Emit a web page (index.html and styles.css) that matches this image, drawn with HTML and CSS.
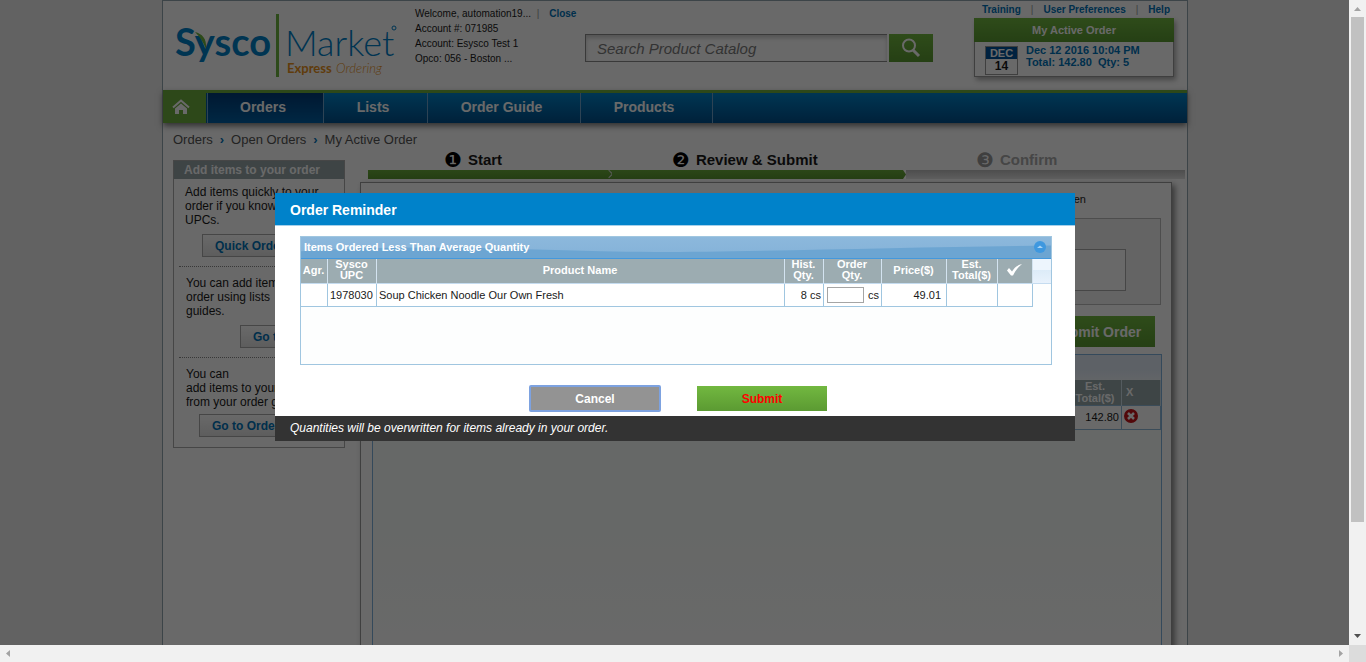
FILE: index.html
```html
<!DOCTYPE html>
<html lang="en">
<head>
<meta charset="utf-8">
<title>My Active Order</title>
<link rel="stylesheet" href="styles.css">
</head>
<body>
<div class="window">
  <div class="viewport">
    <div class="page">
      <header class="header">
        <svg class="logo" width="240" height="84" viewBox="0 0 240 84" role="img" aria-label="Sysco Market Express Ordering">
          <text class="logo-sysco" x="12" y="55">Sysco</text>
          <path d="M32 31c7 2 12 6 11 17c-3-7-5-11-11-17z" fill="#6eb43f"/>
          <rect x="113" y="13" width="3" height="63" fill="#6eb43f"/>
          <text class="logo-market" x="122" y="55">Market</text>
          <circle cx="231" cy="27" r="2" fill="none" stroke="#0080c8"/>
          <text class="logo-express" x="124" y="72">Express</text>
          <text class="logo-ordering" x="173" y="72">Ordering</text>
        </svg>
        <div class="account">
          <div>Welcome, automation19... <span class="sep">|</span> <a href="#">Close</a></div>
          <div>Account #: 071985</div>
          <div>Account: Esysco Test 1</div>
          <div>Opco: 056 - Boston ...</div>
        </div>
        <form class="search">
          <input type="text" aria-label="Search Product Catalog" placeholder="Search Product Catalog">
          <button type="button" aria-label="Search">
            <svg width="20" height="20" viewBox="0 0 20 20" fill="none" stroke="#fff" stroke-width="2"><circle cx="8" cy="7.500" r="6"/><path d="M12 12l6 6" stroke-width="3"/></svg>
          </button>
        </form>
        <div class="tools">
          <nav class="links"><a href="#">Training</a><span class="sep">|</span><a href="#">User Preferences</a><span class="sep">|</span><a href="#">Help</a></nav>
          <section class="active">
            <h2>My Active Order</h2>
            <div class="active-body">
              <div class="cal"><b>DEC</b><span>14</span></div>
              <a href="#">Dec 12 2016 10:04 PM<br>Total: 142.80&nbsp; Qty: 5</a>
            </div>
          </section>
        </div>
      </header>
      <nav class="nav">
        <a class="home" href="#" aria-label="Home"><svg width="18" height="16" viewBox="0 0 18 16"><path d="M1 8.500L9 1.500l8 7" fill="none" stroke="#fff" stroke-width="2"/><path d="M3 9.500l6-5 6 5V15h-4v-4H7v4H3z" fill="#fff"/></svg></a>
        <a class="current w-orders" href="#">Orders</a>
        <a class="w-lists" href="#">Lists</a>
        <a class="w-guide" href="#">Order Guide</a>
        <a class="w-products" href="#">Products</a>
      </nav>
      <div class="content">
        <div class="crumbs"><a href="#">Orders</a><b>›</b><a href="#">Open Orders</a><b>›</b><span>My Active Order</span></div>
        <aside class="side">
          <h2>Add items to your order</h2>
          <div class="side-item">
            <p>Add items quickly to your<br>order if you know</p>
            <p>UPCs.</p>
            <button class="side-btn b-quick" type="button">Quick Order</button>
          </div>
          <div class="side-item">
            <p>You can add items<br>order using lists</p>
            <p>guides.</p>
            <button class="side-btn b-lists" type="button">Go to Lists</button>
          </div>
          <div class="side-item">
            <p>You can<br>add items to your</p>
            <p>from your order guide.</p>
            <button class="side-btn b-guide" type="button">Go to Order Guide</button>
          </div>
        </aside>
        <main class="main">
          <ol class="steps">
            <li class="done s-start"><span><i>❶</i>Start</span></li>
            <li class="done s-review"><span><i>❷</i>Review &amp; Submit</span></li>
            <li class="s-confirm"><span><i>❸</i>Confirm</span></li>
          </ol>
          <section class="panel">
            <div class="filters">
              <input class="f-name" type="text" aria-label="Order name">
              <input class="f-date" type="text" aria-label="Delivery date">
              <button class="f-cal" type="button" aria-label="Calendar"></button>
              <span>Open</span>
            </div>
            <div class="notes"><textarea aria-label="Notes"></textarea></div>
            <button class="submit-order" type="button">Submit Order</button>
            <div class="order-grid">
              <div class="order-title"></div>
              <table>
                <thead><tr><th></th><th class="o-total">Est.<br>Total($)</th><th class="o-x">X</th></tr></thead>
                <tbody><tr><td></td><td class="num">142.80</td><td><svg width="14" height="14" viewBox="0 0 14 14"><circle cx="7" cy="7" r="7" fill="#c8141a"/><path d="M4 4l6 6M10 4l-6 6" stroke="#fff" stroke-width="2.500"/></svg></td></tr></tbody>
              </table>
            </div>
          </section>
        </main>
      </div>
    </div>
    <div class="overlay">
      <div class="dialog" role="dialog" aria-labelledby="dlg-title">
        <h1 id="dlg-title">Order Reminder</h1>
        <div class="dialog-body">
          <section class="grid">
            <div class="grid-title">
              <svg class="swoosh" viewBox="0 0 750 22" preserveAspectRatio="none"><path d="M0 22V15C100 8 200 12 300 15S600 10 750 9v13z" fill="#6ca5d2"/></svg>
              <span>Items Ordered Less Than Average Quantity</span>
              <button type="button" aria-label="Collapse"><svg width="12" height="12" viewBox="0 0 12 12"><circle cx="6" cy="6" r="6" fill="#3f98df"/><path d="M3 7l3-2.500 3 2.500z" fill="#a9d4f5"/></svg></button>
            </div>
            <div class="grid-head">
              <table>
                <colgroup><col class="c-agr"><col class="c-upc"><col><col class="c-hist"><col class="c-qty"><col class="c-price"><col class="c-total"><col class="c-check"></colgroup>
                <thead><tr><th>Agr.</th><th>Sysco<br>UPC</th><th>Product Name</th><th>Hist.<br>Qty.</th><th>Order<br>Qty.</th><th>Price($)</th><th>Est.<br>Total($)</th><th><svg width="17" height="14" viewBox="0 0 17 14"><path d="M1 7.500L3 5l3 3.500C9 4 12 2 16 1c-4 3-7 7-9 11.500H5z" fill="#fff"/></svg></th></tr></thead>
                <tbody><tr><td></td><td>1978030</td><td>Soup Chicken Noodle Our Own Fresh</td><td class="num">8 cs</td><td class="qty"><div><input type="text" aria-label="Order quantity"><span>cs</span></div></td><td class="num price">49.01</td><td></td><td></td></tr></tbody>
              </table>
              <div class="grid-gutter"></div>
            </div>
          </section>
          <div class="actions">
            <button class="cancel" type="button">Cancel</button>
            <button class="submit" type="button">Submit</button>
          </div>
        </div>
        <footer>Quantities will be overwritten for items already in your order.</footer>
      </div>
    </div>
  </div>
  <div class="bar-v">
    <svg width="17" height="17"><path d="M5 11h7L8.500 7z" fill="#a3a3a3"/></svg>
    <div class="thumb-v"></div>
    <svg class="end" width="17" height="17"><path d="M5 6h7l-3.500 4z" fill="#505050"/></svg>
  </div>
  <div class="bar-h">
    <svg width="17" height="17"><path d="M10 5v7L6 8.500z" fill="#a3a3a3"/></svg>
    <svg width="17" height="17"><path d="M7 5v7l4-3.500z" fill="#a3a3a3"/></svg>
  </div>
  <div class="corner"></div>
</div>
</body>
</html>
```
FILE: styles.css
```css
* { box-sizing: border-box; }
body, h1, h2, p, ol { margin: 0; padding: 0; }
body { font: 12px "Liberation Sans", Arial, sans-serif; color: #1a1a1a; }
button, input, textarea { font-family: inherit; border-radius: 0; padding: 0; margin: 0; }
a { color: #0073b8; text-decoration: none; }

.window { display: grid; grid-template: minmax(0, 1fr) 17px / minmax(0, 1fr) 17px; height: 100vh; }
.viewport { position: relative; overflow: hidden; display: flex; background: #ededed; }
.page {
  width: 100%; max-width: 1026px; min-height: 100%; margin: 0 161px 0 162px;
  background: #fff; border: 1px solid #93a5ae; border-bottom: 0;
  display: flex; flex-direction: column;
}

/* header */
.header { display: grid; grid-template-columns: 252px 170px 348px 1fr; height: 89px; flex: none; }
.logo-sysco { font: bold 38px Lato, sans-serif; fill: #0080c8; }
.logo-market { font: 300 36px Lato, sans-serif; fill: #0080c8; }
.logo-express { font: bold 13px Lato, sans-serif; fill: #e8911c; }
.logo-ordering { font: italic 300 13px Lato, sans-serif; fill: #e8911c; }
.account { padding-top: 5px; font-size: 10px; line-height: 15px; white-space: nowrap; }
.account a { font-weight: bold; margin-left: 4px; }
.sep { color: #999; margin: 0 3px; }
.search { display: flex; gap: 2px; height: 28px; margin-top: 33px; }
.search input {
  flex: 1; min-width: 0; padding-left: 11px; background: #fff; border: 1px solid #8c8c8c;
  border-width: 1px 0 1px 1px; box-shadow: inset 0 3px 4px #ccc; font-size: 15px; font-style: italic;
}
.search input::placeholder { color: #7c7c7c; opacity: 1; }
.search button, .submit-order, .submit { border: 0; background: linear-gradient(#72b840, #5b9a32); }
.search button { width: 44px; display: flex; align-items: center; justify-content: center; }
.tools { padding-right: 13px; }
.links { display: flex; justify-content: flex-end; gap: 7px; padding: 2px 4px 0 0; height: 17px; font-size: 10px; line-height: 13px; font-weight: bold; }
.links .sep { font-weight: normal; }
.active { width: 200px; margin-left: auto; background: #fff; border: 1px solid #999; border-top: 0; box-shadow: 2px 3px 5px #aaa; }
.active h2 { background: linear-gradient(#72b840, #5b9a32); margin: 0 -1px; color: #fff; font-size: 11px; line-height: 24px; text-align: center; }
.active-body { display: flex; gap: 8px; height: 34px; padding: 2px 0 0 10px; font-size: 11px; line-height: 12px; font-weight: bold; }
.cal { width: 33px; height: 29px; margin-top: 2px; border: 1px solid #999; text-align: center; }
.cal b { display: block; background: #00549c; color: #fff; height: 12px; }
.cal span { display: block; line-height: 15px; font-size: 12px; }

/* main navigation */
.nav { display: flex; height: 33px; flex: none; border-top: 3px solid #6eae3e; background: linear-gradient(#0083c9, #00508c); box-shadow: 0 3px 6px #777; }
.nav a { color: #fff; font-size: 14px; font-weight: bold; line-height: 28px; text-align: center; border-right: 1px solid #6ea3cc; }
.nav .home { width: 45px; padding-top: 4px; line-height: 16px; background: linear-gradient(90deg, #6eae3e 43px, #005a9c 43px); }
.nav .home svg { margin-top: 2px; margin-right: 8px; }
.nav .current { background: linear-gradient(#003c78, #0060a4); }
.w-orders { width: 116px; padding-right: 5px; }
.w-lists { width: 104px; padding-right: 5px; }
.w-guide { width: 153px; padding-right: 5px; }
.w-products { width: 132px; padding-right: 5px; }

/* page content */
.content {
  flex: 1; display: grid; grid-template: 28px 1fr / 172px minmax(0, 1fr); column-gap: 15px;
  padding: 9px 2px 0 10px;
}
.crumbs { grid-row: 1; grid-column: 1 / 3; font-size: 13px; line-height: 16px; color: #555; }
.crumbs a { color: #555; }
.crumbs b { color: #0073b8; margin: 0 7px; }
.side { grid-row: 2; grid-column: 1; align-self: start; height: 288px; border: 1px solid #aaa; background: #fff; overflow: hidden; white-space: nowrap; }
.side h2 { background: #96a5a9; color: #fff; font-size: 12px; line-height: 18px; padding-left: 10px; }
.side-item { margin: 0 5px; padding: 6px 0 9px 6px; border-bottom: 1px dotted #888; line-height: 14px; }
.side-item + .side-item { padding-top: 9px; padding-left: 7px; }
.side-item:last-child { border: 0; }
.side-btn { display: block; height: 23px; margin-top: 7px; border: 1px solid #aaa; background: linear-gradient(#fff, #e2e2e2); color: #0073b8; font-size: 12px; font-weight: bold; padding: 0 12px; }
.b-quick { margin-left: 17px; }
.b-lists { margin-left: 54px; }
.b-guide { margin-left: 13px; margin-top: 5px; }
.main { grid-row: 2; grid-column: 2; display: flex; flex-direction: column; margin-top: -10px; }
.steps { list-style: none; display: grid; grid-template-columns: 244px 294px 1fr; margin-left: 8px; font-size: 15px; font-weight: bold; line-height: 20px; }
.steps li { position: relative; }
.steps li::after { content: ""; display: block; height: 9px; background: linear-gradient(#bbb, #e4e4e4); }
.steps .done::after { background: linear-gradient(#6aac3a, #5a9630); }
.steps .s-review::after { clip-path: polygon(0 0, 291px 0, 100% 50%, 291px 100%, 0 100%); }
.steps .s-start::before { content: ""; position: absolute; right: 0; bottom: 2px; width: 5px; height: 5px; border: 1px solid #ddd; border-width: 1px 1px 0 0; transform: rotate(45deg); }
.steps span { display: flex; gap: 6px; }
.steps i { font: normal 20px/20px "DejaVu Sans", sans-serif; color: #000; }
.s-start span { padding-left: 76px; }
.s-review span { padding-left: 60px; }
.s-confirm span { padding-left: 70px; color: #aaa; }
.steps .s-confirm i { color: #999; }
.panel { flex: 1; margin: 3px 13px 0 0; padding: 10px 9px 0 11px; background: #fff; border: 1px solid #999; border-bottom: 0; box-shadow: 3px 3px 6px #888; }
.filters { display: flex; height: 25px; padding: 0 76px 0 52px; font-size: 11px; }
.f-name, .f-date, .f-cal { height: 20px; background: #fff; border: 1px solid #777; }
.f-name { width: 214px; }
.f-date { width: 64px; margin-left: 212px; }
.f-cal { width: 19px; margin: 0 auto 0 5px; border-color: #003c78; }
.notes { height: 87px; margin-right: 1px; padding: 30px 34px; background: #f2f2f2; border: 1px solid #bbb; display: flex; }
.notes textarea { flex: 1; height: 42px; border: 1px solid #aaa; background: #fff; resize: none; }
.submit-order { display: block; margin: 11px 7px 7px auto; width: 117px; height: 31px; color: #fff; font-size: 14px; font-weight: bold; }
.order-grid { height: 300px; border: 1px solid #7fb2dd; background: linear-gradient(#f8fcfa 60%, #fff); font-size: 11px; }
.order-title { height: 25px; background: linear-gradient(#e2ecf8 60%, #eef4fb); }
.order-grid table { width: 100%; border-collapse: collapse; table-layout: fixed; }
.order-grid th { background: #96a8ab; color: #fff; height: 25px; padding: 0; line-height: 12px; border-right: 1px solid #ccdde6; }
.order-grid td { height: 24px; padding: 0 2px; border: 1px solid #8fb8d8; border-left: 0; background: #fff; }
.order-grid td svg { display: block; margin-bottom: 3px; }
.o-total { width: 53px; }
.order-grid .o-x { width: 39px; text-align: left; padding-left: 4px; }
.num { text-align: right; }

/* dialog */
.overlay { position: absolute; inset: 0; padding: 193px 0 0 1px; background: rgba(0, 0, 0, .59); }
.dialog { width: 100%; max-width: 800px; margin: 0 auto; background: #fff; }
.dialog h1 { background: #0082ca; border-bottom: 1px solid #a5cfea; color: #fff; font-size: 14px; line-height: 32px; padding: 1px 15px 0; height: 33px; }
.dialog-body { padding: 10px 23px 4px 25px; }
.grid { height: 129px; border: 1px solid #a0c6e0; background: #fdfefe; font-size: 11px; }
.grid-title { position: relative; display: flex; align-items: center; justify-content: space-between; height: 22px; padding: 0 5px 2px 3px; background: linear-gradient(#8cb8dc, #84b2d8); border-bottom: 1px solid #4398dd; color: #fff; font-weight: bold; }
.swoosh { position: absolute; inset: 0; width: 100%; height: 100%; }
.grid-title span, .grid-title button { position: relative; }
.grid-title button { border: 0; background: none; height: 12px; display: flex; }
.grid-head { display: flex; }
.grid table { flex: 1; border-collapse: separate; border-spacing: 0; table-layout: fixed; width: 0; }
.grid-gutter { width: 18px; height: 25px; border-bottom: 1px solid #c5dcf0; background: linear-gradient(#edf5fd 45%, #dcebf8 45%, #e8f2fc); }
.grid th { height: 25px; padding: 0 1px 2px 0; background: #9cacb1; color: #fff; line-height: 11px; border-right: 1px solid #d3e3f0; border-bottom: 1px solid #c5dcf0; }
.grid th svg { display: block; margin: 0 auto; }
.grid td { height: 23px; padding: 0 2px; background: #fff; white-space: nowrap; border-right: 1px solid #a0c6e0; border-bottom: 1px solid #a0c6e0; }
.grid .price { padding-right: 5px; }
.qty div { display: flex; align-items: center; justify-content: space-between; padding-left: 1px; }
.grid td input { width: 37px; height: 16px; border: 1px solid #a5a5a5; background: #fff; }
.c-agr { width: 27px; }
.c-upc { width: 49px; }
.c-hist { width: 39px; }
.c-qty { width: 58px; }
.c-price { width: 65px; }
.c-total { width: 51px; }
.c-check { width: 35px; }
.actions { display: flex; gap: 36px; justify-content: center; padding: 20px 0 0 4px; }
.actions button { height: 27px; font-size: 12px; font-weight: bold; }
.cancel { width: 132px; background: #939393; color: #fff; border: 2px solid #7da2e0; border-radius: 2px; }
.actions .submit { width: 130px; height: 25px; margin-top: 1px; color: #f00; }
.dialog footer { background: #333; color: #fff; font-size: 12px; font-style: italic; line-height: 25px; padding: 0 15px; }

/* scroll bars */
.bar-v { background: #f1f1f1; display: flex; flex-direction: column; }
.bar-v .end { margin-top: auto; }
.thumb-v { width: 13px; height: 80%; max-height: 505px; margin: 0 2px; background: #c1c1c1; }
.bar-h { background: #f1f1f1; display: flex; justify-content: space-between; }
.corner { background: #dcdcdc; }
```
